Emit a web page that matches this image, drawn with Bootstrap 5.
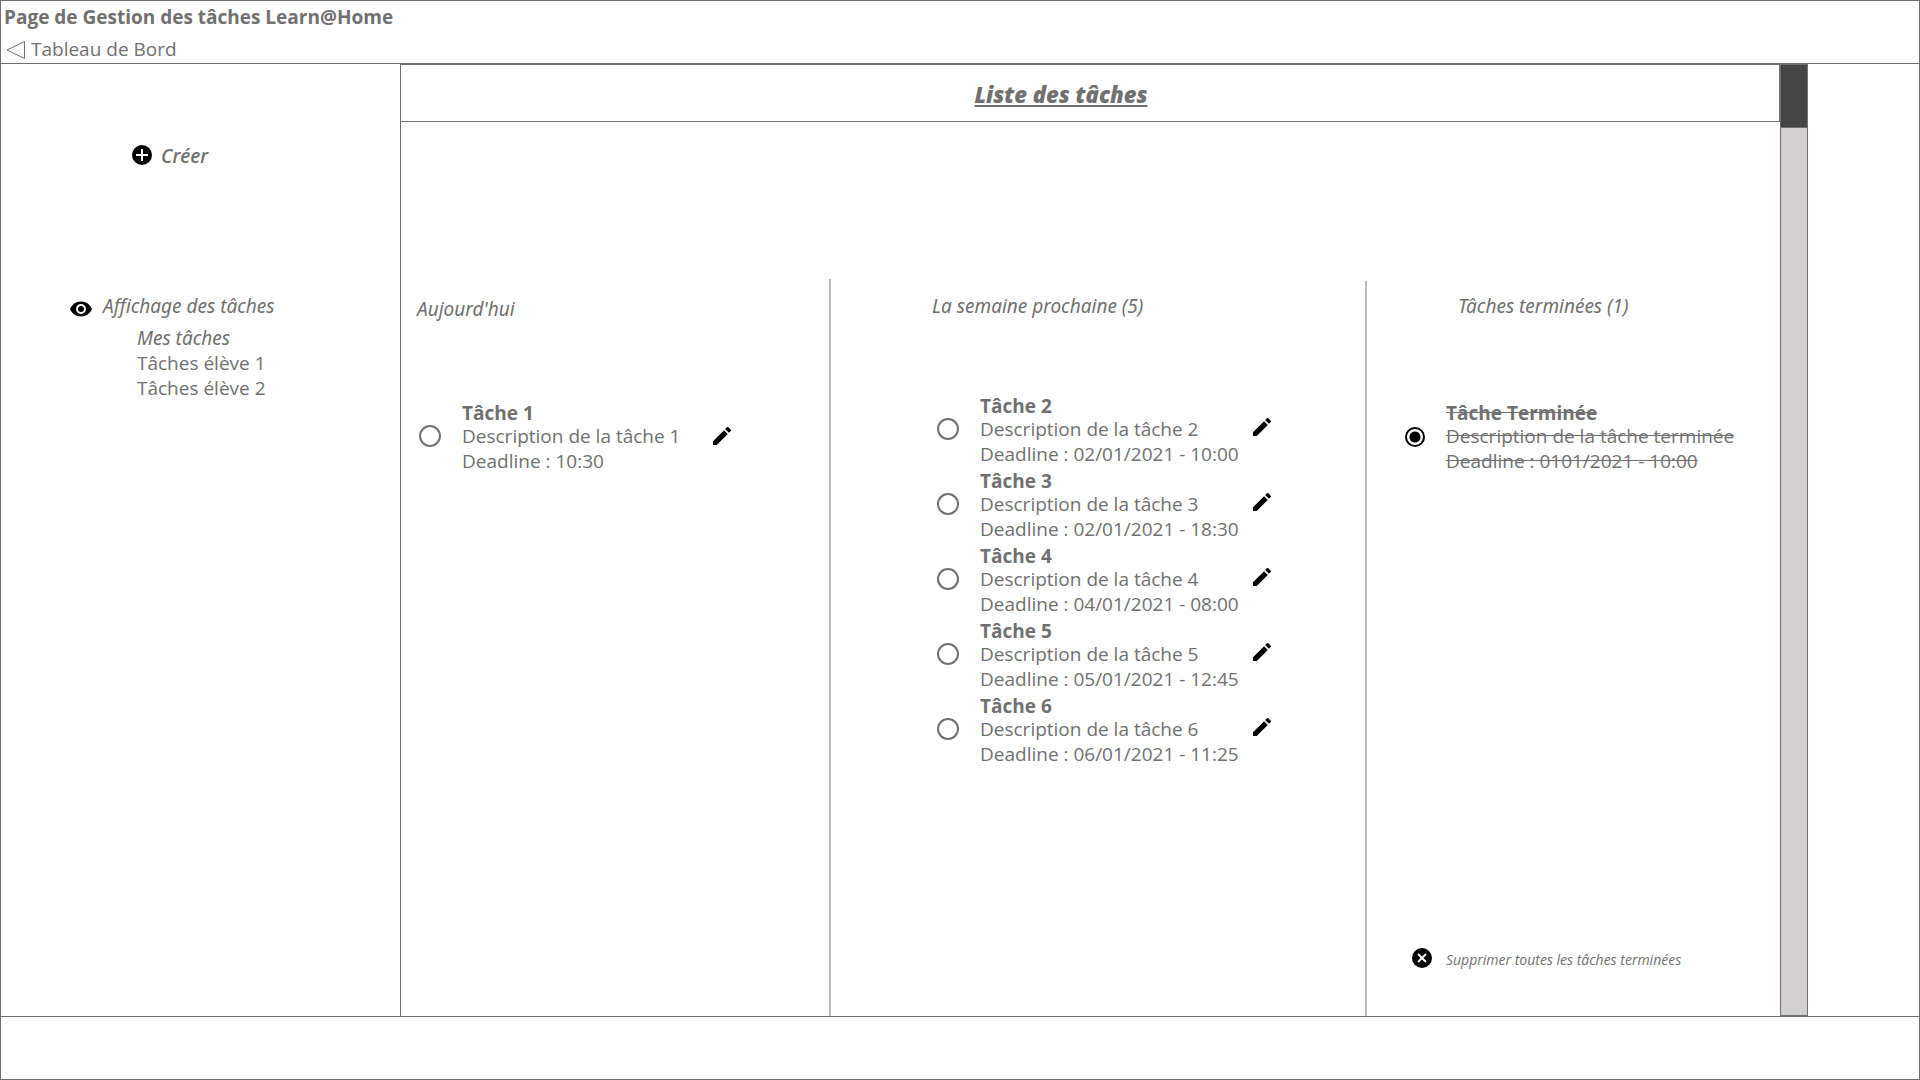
<!DOCTYPE html>
<html lang="fr">
<head>
<meta charset="utf-8">
<meta name="viewport" content="width=device-width, initial-scale=1">
<title>Gestion des tâches Learn@Home</title>
<link href="https://cdn.jsdelivr.net/npm/bootstrap@5.3.0/dist/css/bootstrap.min.css" rel="stylesheet">
<style>
  :root { --ink: #707070; --rule: #b8b8b8; }
  body { font-family: "Open Sans", "Noto Sans", sans-serif; font-size: 19px; line-height: 25px; color: var(--ink); background: #fff; }
  h1, h2, h3 { font-size: 19px; line-height: 25px; margin: 0; }
  a, button { color: inherit; }
  .page-frame { border: 1px solid var(--ink); }
  .line { border: 0 solid var(--ink); }
  .slanted { font-family: "Noto Sans", "Open Sans", sans-serif; font-style: italic; font-weight: 400; }
  .top-bar { border-bottom-width: 1px; height: 63px; padding: 4px 3px 0; gap: 7px; }
  .top-bar a { gap: 6px; padding-left: 2px; }
  .bottom-bar { border-top-width: 1px; height: 63px; }
  .plain-btn { background: none; border: 0; padding: 0; text-align: left; }
  .side { width: 399px; padding: 80px 0 0 68px; }
  .create-btn { gap: 8px; margin-left: 62px; }
  .views { margin-top: 125px; }
  .views-head { gap: 10px; }
  .views-head svg { margin-top: 3px; }
  .views ul { padding-left: 68px; margin-top: 5px; }
  .board { border-left-width: 1px; }
  .board-title { border-width: 1px 1px 1px 0; height: 58px; padding: 11px 58px 0 0; }
  .board-title h1 { font-size: 22px; line-height: 36px; font-weight: 800; text-decoration: underline; }
  .columns { display: grid; grid-template-columns: 428fr 536fr 415fr; padding-top: 157px; }
  .col-today { padding: 18px 0 0 16px; }
  .col-today ul { margin-top: 77px; padding-left: 2px; --body: 251px; --edit: 28px; }
  .col-week { border-left: 2px solid var(--rule); padding: 15px 0 0 101px; }
  .col-week ul { margin-top: 73px; padding-left: 5px; --body: 273px; --edit: 26px; }
  .col-done { border-left: 2px solid var(--rule); margin-top: 2px; padding: 13px 0 46px 38px; }
  .col-done h2 { padding-left: 53px; }
  .col-done ul { margin-top: 80px; }
  .task { display: flex; }
  .task-body { width: var(--body); margin-left: 21px; padding-top: 3px; }
  .col-done .task-body { width: auto; text-decoration: line-through; }
  .task-body h3 { line-height: 22px; font-weight: 700; }
  .task input { appearance: none; flex: none; margin: 26px 0 0; width: 22px; height: 22px; border: 2px solid var(--ink); border-radius: 50%; background: #fff; }
  .col-done .task input { margin-top: 28px; width: 20px; height: 20px; border-color: #000; }
  .task input:checked { background: radial-gradient(circle, #000 5px, #fff 6px); }
  .edit-btn { align-self: flex-start; margin-top: var(--edit); line-height: 0; }
  .purge-btn { gap: 14px; margin-left: 7px; font-size: 14px; line-height: 20px; }
  .purge-btn span { padding-top: 2px; }
  .scroll-track { width: 28px; background: #d1cfd0; border-width: 1px; }
  .scroll-thumb { height: 63px; background: #444; border-bottom-width: 1px; }
  .margin-right { width: 111px; }
</style>
<script src="https://cdn.jsdelivr.net/npm/bootstrap@5.3.0/dist/js/bootstrap.bundle.min.js"></script>
</head>
<body>
<svg class="d-none" aria-hidden="true">
  <symbol id="pencil" viewBox="3 3 18 18"><path d="M3 17.25V21h3.75L17.81 9.94l-3.75-3.75L3 17.25zM20.71 7.04a1 1 0 0 0 0-1.41l-2.34-2.34a1 1 0 0 0-1.41 0l-1.83 1.83 3.75 3.75 1.83-1.83z"/></symbol>
</svg>
<div class="page-frame min-vh-100 d-flex flex-column">
  <header class="line top-bar d-flex flex-column">
    <h2 class="fw-bold">Page de Gestion des tâches Learn@Home</h2>
    <a href="#" class="d-flex align-items-center text-decoration-none">
      <svg width="19" height="20" viewBox="0 0 19 20" fill="none" stroke="#707070" aria-hidden="true"><path d="M18.500 1.500v17L1 10z"/></svg>
      Tableau de Bord
    </a>
  </header>

  <div class="d-flex flex-grow-1">
    <aside class="side flex-shrink-0">
      <button type="button" class="plain-btn create-btn d-flex fst-italic fw-semibold">
        <svg width="22" height="22" viewBox="1 1 22 22" aria-hidden="true"><circle cx="12" cy="12" r="10"/><path d="M12 6v12M6 12h12" stroke="#fff" stroke-width="2"/></svg>
        Créer
      </button>
      <nav class="views" aria-label="Affichage des tâches">
        <div class="views-head d-flex align-items-start">
          <svg width="24" height="24" viewBox="0 0 24 24" aria-hidden="true"><path d="M12 4.500C7 4.500 2.730 7.610 1 12c1.730 4.390 6 7.500 11 7.500s9.270-3.110 11-7.500c-1.730-4.390-6-7.500-11-7.500zM12 17a5 5 0 1 1 0-10 5 5 0 0 1 0 10zm0-8a3 3 0 1 0 0 6 3 3 0 0 0 0-6z"/></svg>
          <h2 class="slanted">Affichage des tâches</h2>
        </div>
        <ul class="list-unstyled mb-0">
          <li><a href="#" class="text-decoration-none slanted">Mes tâches</a></li>
          <li><a href="#" class="text-decoration-none">Tâches élève 1</a></li>
          <li><a href="#" class="text-decoration-none">Tâches élève 2</a></li>
        </ul>
      </nav>
    </aside>

    <main class="line board flex-grow-1 d-flex flex-column">
      <div class="line board-title text-center">
        <h1 class="fst-italic">Liste des tâches</h1>
      </div>
      <div class="columns flex-grow-1">
        <section class="col-today">
          <h2 class="slanted">Aujourd'hui</h2>
          <ul class="list-unstyled mb-0">
            <li class="task"><input type="radio" id="t1" name="t1"><label class="task-body" for="t1"><h3>Tâche 1</h3>Description de la tâche 1<br>Deadline : 10:30</label><button type="button" class="plain-btn edit-btn" aria-label="Modifier"><svg width="18" height="18"><use href="#pencil"/></svg></button></li>
          </ul>
        </section>
        <section class="col-week">
          <h2 class="slanted">La semaine prochaine (5)</h2>
          <ul class="list-unstyled mb-0">
            <li class="task"><input type="radio" id="t2" name="t2"><label class="task-body" for="t2"><h3>Tâche 2</h3>Description de la tâche 2<br>Deadline : 02/01/2021 - 10:00</label><button type="button" class="plain-btn edit-btn" aria-label="Modifier"><svg width="18" height="18"><use href="#pencil"/></svg></button></li>
            <li class="task"><input type="radio" id="t3" name="t3"><label class="task-body" for="t3"><h3>Tâche 3</h3>Description de la tâche 3<br>Deadline : 02/01/2021 - 18:30</label><button type="button" class="plain-btn edit-btn" aria-label="Modifier"><svg width="18" height="18"><use href="#pencil"/></svg></button></li>
            <li class="task"><input type="radio" id="t4" name="t4"><label class="task-body" for="t4"><h3>Tâche 4</h3>Description de la tâche 4<br>Deadline : 04/01/2021 - 08:00</label><button type="button" class="plain-btn edit-btn" aria-label="Modifier"><svg width="18" height="18"><use href="#pencil"/></svg></button></li>
            <li class="task"><input type="radio" id="t5" name="t5"><label class="task-body" for="t5"><h3>Tâche 5</h3>Description de la tâche 5<br>Deadline : 05/01/2021 - 12:45</label><button type="button" class="plain-btn edit-btn" aria-label="Modifier"><svg width="18" height="18"><use href="#pencil"/></svg></button></li>
            <li class="task"><input type="radio" id="t6" name="t6"><label class="task-body" for="t6"><h3>Tâche 6</h3>Description de la tâche 6<br>Deadline : 06/01/2021 - 11:25</label><button type="button" class="plain-btn edit-btn" aria-label="Modifier"><svg width="18" height="18"><use href="#pencil"/></svg></button></li>
          </ul>
        </section>
        <section class="col-done d-flex flex-column">
          <h2 class="slanted">Tâches terminées (1)</h2>
          <ul class="list-unstyled mb-0">
            <li class="task"><input type="radio" id="t0" name="t0" checked><label class="task-body" for="t0"><h3>Tâche Terminée</h3>Description de la tâche terminée<br>Deadline : 0101/2021 - 10:00</label></li>
          </ul>
          <button type="button" class="plain-btn purge-btn d-flex mt-auto fst-italic">
            <svg width="20" height="20" viewBox="2 2 20 20" aria-hidden="true"><circle cx="12" cy="12" r="10"/><path d="M8 8l8 8M16 8l-8 8" stroke="#fff" stroke-width="2"/></svg>
            <span>Supprimer toutes les tâches terminées</span>
          </button>
        </section>
      </div>
    </main>

    <div class="line scroll-track flex-shrink-0"><div class="line scroll-thumb"></div></div>
    <div class="margin-right flex-shrink-0"></div>
  </div>

  <footer class="line bottom-bar"></footer>
</div>
</body>
</html>
